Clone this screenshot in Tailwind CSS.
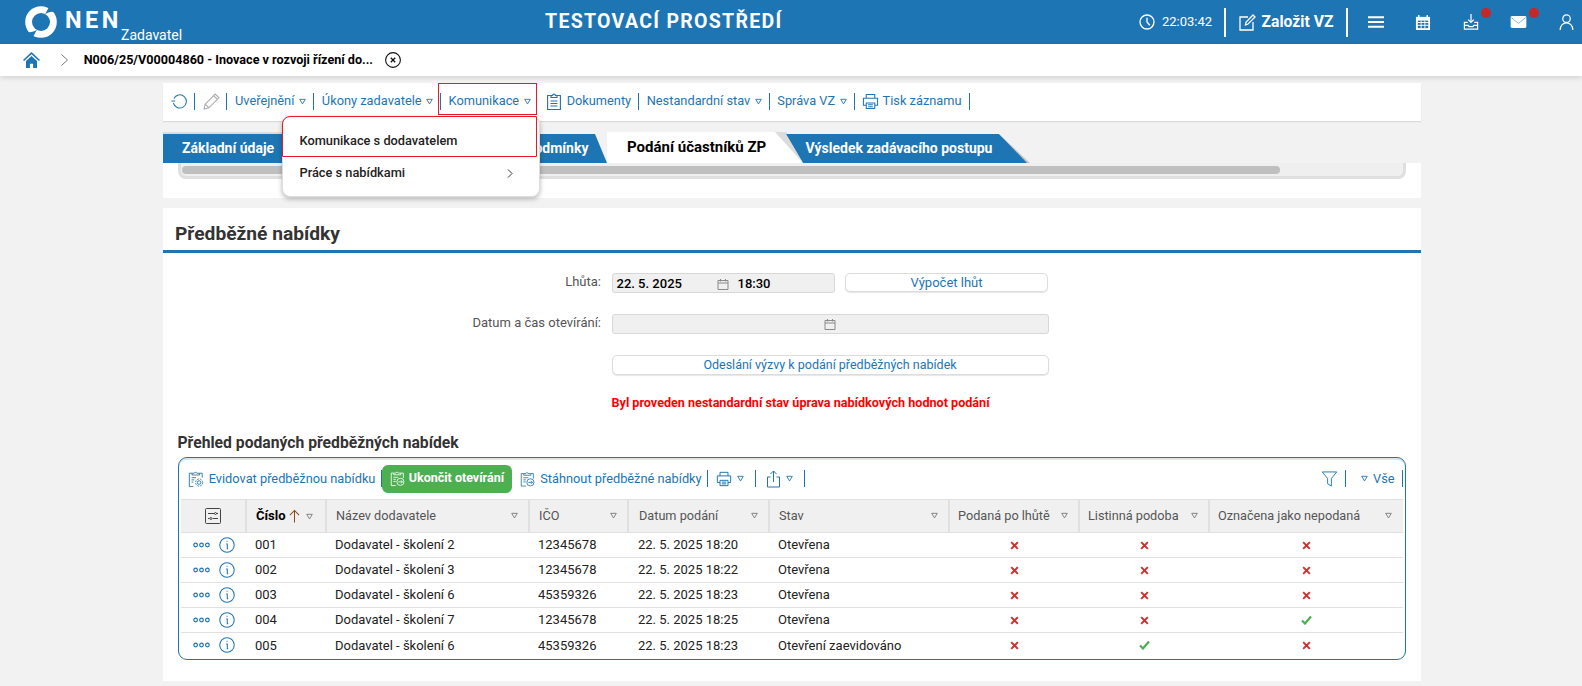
<!DOCTYPE html>
<html lang="cs">
<head>
  <meta charset="UTF-8">
  <title>NEN Zadavatel</title>
  <script src="https://cdn.jsdelivr.net/npm/@tailwindcss/browser@4"></script>
</head>
<body class="bg-[#f2f2f2] font-['Roboto',sans-serif] h-[686px] w-[1582px] overflow-hidden relative">
  <!-- shared icons -->
  <svg class="hidden">
    <symbol id="tri" viewBox="0 0 8 8"><path d="M.8 1.500h6.400L4 6.800z" fill="none" stroke="currentColor" stroke-width="1"/></symbol>
    <symbol id="dots" viewBox="0 0 17 6"><g fill="none" stroke="#1e75b3" stroke-width="1.200"><circle cx="2.600" cy="3" r="1.800"/><circle cx="8.500" cy="3" r="1.800"/><circle cx="14.400" cy="3" r="1.800"/></g></symbol>
    <symbol id="info" viewBox="0 0 17 17"><circle cx="8.500" cy="8.500" r="7.700" fill="none" stroke="#1e75b3" stroke-width="1.100"/><path d="M8 4.600h1.100M7.600 7.400h1.200v5h1" fill="none" stroke="#1e75b3" stroke-width="1.100"/></symbol>
    <symbol id="no" viewBox="0 0 10 10"><path d="M1.300 1.300l7.400 7.400M8.700 1.300l-7.400 7.400" stroke="#d32f2f" stroke-width="2.200"/></symbol>
    <symbol id="yes" viewBox="0 0 11 10"><path d="M1 5.500l3 3 6-7" fill="none" stroke="#4caf50" stroke-width="2.200"/></symbol>
    <symbol id="cal" viewBox="0 0 12 12"><path d="M1 2.500h10v9H1zM1 5h10M3.500 1v2.500M8.500 1v2.500" fill="none" stroke="#8a8a8a"/></symbol>
    <symbol id="print" viewBox="0 0 18 18"><g fill="none" stroke="currentColor" stroke-width="1.100"><path d="M4.500 5.500V1.500h9v4M4.500 13H1.500V5.500h15V13h-3"/><path d="M4.500 10.500h9v6h-9zM6.500 12.500h5M6.500 14.500h5"/></g></symbol>
    <symbol id="clip" viewBox="0 0 14 17"><g fill="none" stroke="currentColor" stroke-width="1.100"><path d="M4 2.500H.6v14h12.800v-14H10"/><path d="M4 4.500v-2h1.600a1.400 1.400 0 0 1 2.800 0H10v2z"/><path d="M3.500 8h7M3.500 10.500h7M3.500 13h7"/></g></symbol>
    <symbol id="clipgo" viewBox="0 0 18 20"><g fill="none" stroke="currentColor" stroke-width="1"><path d="M7 18.500H1.500v-15h3M13 3.500h3v6"/><path d="M4.500 5.500v-2h2.500a1.600 1.600 0 0 1 3 0h3v2z"/><path d="M4 8.500h6M4 11h3M4 13.500h3"/><circle cx="12.500" cy="14" r="4.300"/><path d="M10 14h5M13.200 12.200L15 14l-1.800 1.800"/></g></symbol>
  </svg>

  <!-- header -->
  <header class="h-[44px] bg-[#1e75b3] text-white flex items-center">
    <div class="w-[1124px] flex items-center pl-[25px] shrink-0">
      <svg class="w-[32px] h-[32px] shrink-0" viewBox="0 0 32 32">
        <circle cx="16" cy="16" r="15.800" fill="#fff"/>
        <circle cx="16" cy="16" r="9" fill="#1e75b3"/>
        <path d="M20 8.500C24 5.500 28 5 32 7L31 2 24 1z" fill="#1e75b3"/>
        <path d="M12 23.500C8 26.500 4 27 0 25l1 5 7 1z" fill="#1e75b3"/>
      </svg>
      <span class="ml-[8px] w-[56px] text-[23.500px] leading-none font-bold tracking-[3.500px] mb-[2px]">NEN</span>
      <span class="text-[14px] leading-none mt-[26px] w-[60px]">Zadavatel</span>
      <h1 class="ml-[364px] text-[19.500px] font-bold tracking-[1.300px] whitespace-nowrap">TESTOVACÍ PROSTŘEDÍ</h1>
    </div>
    <div class="flex items-center h-full grow">
      <svg class="w-[16px] h-[16px] ml-[14.500px]" viewBox="0 0 16 16" fill="none" stroke="#fff" stroke-width="1.300"><circle cx="8" cy="8" r="7"/><path d="M8 3.800V8l2.800 3.200"/></svg>
      <span class="ml-[7.500px] text-[13px] w-[50px]">22:03:42</span>
      <span class="ml-[12px] w-[2px] h-[29px] bg-white"></span>
      <svg class="w-[17px] h-[17px] ml-[12.500px]" viewBox="0 0 17 17" fill="none" stroke="#fff" stroke-width="1.300"><path d="M9 3H1v13h13V8"/><path d="M6.500 11l.6-3L14 1l2 2-7 7z"/></svg>
      <span class="ml-[6px] w-[72px] text-[15.700px] font-bold whitespace-nowrap">Založit VZ</span>
      <span class="ml-[12.700px] w-[2px] h-[29px] bg-white"></span>
      <svg class="w-[16px] h-[14px] ml-[19.600px]" viewBox="0 0 17 14" stroke="#fff" stroke-width="2"><path d="M0 2h17M0 7h17M0 12h17"/></svg>
      <svg class="w-[16px] h-[17px] ml-[31.700px]" viewBox="0 0 17 18"><path d="M1 3h15v14H1z" fill="#fff"/><path d="M4 1v3M13 1v3" stroke="#fff" stroke-width="1.500"/><path d="M3 7h11v8H3z" fill="#1e75b3"/><path d="M3 9h11M3 12h11M6.500 7v8M10.500 7v8" stroke="#fff"/></svg>
      <div class="relative ml-[32px] w-[16px] h-[16px]">
        <svg class="w-[16px] h-[16px]" viewBox="0 0 16 17" fill="none" stroke="#fff" stroke-width="1.300"><path d="M8 0v9M5 6l3 3 3-3"/><path d="M4.500 9H1v7h14V9h-3.500M1 12h4l1 1.500h4l1-1.500h4" /></svg>
        <span class="absolute -top-[6px] left-[17.400px] w-[10px] h-[10px] rounded-full bg-[#c62828]"></span>
      </div>
      <div class="relative ml-[30.700px] w-[17px] h-[12px]">
        <svg class="w-[17px] h-[12px]" viewBox="0 0 17 13"><rect width="17" height="13" rx="1.500" fill="#fff"/><path d="M.5 1.500L8.500 8l8-6.500" fill="none" stroke="#7fb2d6"/></svg>
        <span class="absolute -top-[8.300px] left-[19px] w-[10px] h-[10px] rounded-full bg-[#c62828]"></span>
      </div>
      <svg class="w-[15px] h-[16px] ml-[32px]" viewBox="0 0 15 17" fill="none" stroke="#fff" stroke-width="1.300"><circle cx="7.500" cy="5" r="4"/><path d="M.7 17c0-4.500 3-7.500 6.800-7.500s6.800 3 6.800 7.500"/></svg>
    </div>
  </header>

  <!-- breadcrumb -->
  <nav class="h-[32px] bg-white flex items-center shadow-[0_2px_5px_rgba(0,0,0,0.13)] relative">
    <svg class="w-[17px] h-[16px] ml-[23px]" viewBox="0 0 16 15" fill="#1e75b3"><path d="M8 0L0 7.500l1 1L8 2l7 6.500 1-1z"/><path d="M2.800 8.500L8 3.800l5.200 4.700V15H9.500v-4h-3v4H2.800z"/></svg>
    <svg class="w-[7px] h-[12px] ml-[20.700px]" viewBox="0 0 7 12" fill="none" stroke="#777" stroke-width="1"><path d="M.5.500L6.500 6l-6 5.500"/></svg>
    <span class="ml-[16px] w-[288.500px] text-[12.600px] font-bold text-black whitespace-nowrap">N006/25/V00004860 - Inovace v rozvoji řízení do...</span>
    <svg class="w-[16px] h-[16px] ml-[12.500px]" viewBox="0 0 16 16" fill="none" stroke="#111" stroke-width="1.100"><circle cx="8" cy="8" r="7.400"/><path d="M5.800 5.800l4.400 4.400M10.200 5.800l-4.400 4.400" stroke-width="1.300"/></svg>
  </nav>

  <main class="ml-[163px] w-[1258px]">
    <!-- action toolbar -->
    <div class="mt-[7px] h-[38px] pb-[2px] bg-white flex items-center pl-[7.500px] text-[12.800px] text-[#1e75b3] whitespace-nowrap shadow-[0_1px_1px_rgba(0,0,0,0.1)]">
      <svg class="w-[16px] h-[16px]" viewBox="0 0 17 16" fill="none" stroke="#1e75b3" stroke-width="1.100"><path d="M3 5.500A7 7 0 1 1 2.500 10M.5 8h4"/></svg>
      <span class="ml-[7px] w-px h-[17px] bg-[#1e75b3]"></span>
      <svg class="w-[17px] h-[17px] ml-[8px]" viewBox="0 0 16 16" fill="none" stroke="#aaa" stroke-width="1"><path d="M1 15l1-4.500L11.500 1l3.500 3.500L5.500 14zM2 10.500L5.500 14M10 2.500l3.500 3.500"/></svg>
      <span class="ml-[6.500px] w-px h-[17px] bg-[#1e75b3]"></span>
      <span class="ml-[8px]">Uveřejnění</span><svg class="w-[7px] h-[7px] ml-[4.500px] mt-[1px]"><use href="#tri"/></svg>
      <span class="ml-[7px] w-px h-[17px] bg-[#1e75b3]"></span>
      <span class="ml-[8px]">Úkony zadavatele</span><svg class="w-[7px] h-[7px] ml-[4.500px] mt-[1px]"><use href="#tri"/></svg>
      <span class="ml-[6.500px] w-px h-[17px] bg-[#1e75b3]"></span>
      <span class="ml-[8px]">Komunikace</span><svg class="w-[7px] h-[7px] ml-[4.500px] mt-[1px]"><use href="#tri"/></svg>
      <svg class="w-[14px] h-[17px] ml-[16.500px]"><use href="#clip"/></svg>
      <span class="ml-[5.500px]">Dokumenty</span>
      <span class="ml-[7px] w-px h-[17px] bg-[#1e75b3]"></span>
      <span class="ml-[7.500px]">Nestandardní stav</span><svg class="w-[7px] h-[7px] ml-[4.500px] mt-[1px]"><use href="#tri"/></svg>
      <span class="ml-[7px] w-px h-[17px] bg-[#1e75b3]"></span>
      <span class="ml-[7.500px]">Správa VZ</span><svg class="w-[7px] h-[7px] ml-[4.500px] mt-[1px]"><use href="#tri"/></svg>
      <span class="ml-[7px] w-px h-[17px] bg-[#1e75b3]"></span>
      <svg class="w-[17px] h-[17px] ml-[7px]"><use href="#print"/></svg>
      <span class="ml-[4px]">Tisk záznamu</span>
      <span class="ml-[7px] w-px h-[17px] bg-[#1e75b3]"></span>
    </div>

    <!-- tabs -->
    <div class="mt-[11px] h-[31px] flex items-end text-[14px] font-bold text-white whitespace-nowrap">
      <div class="h-[29px] w-[130px] bg-[#1e75b3] pl-[19px] flex items-center shadow-[0_-2px_0_#dcdcdc]">Základní údaje</div>
      <div class="h-[29px] w-[314px] bg-[#1e75b3] pr-[18.500px] flex items-center justify-end [clip-path:polygon(0_0,calc(100%-12px)_0,100%_100%,0_100%)]">Zadávací podmínky</div>
      <div class="h-[31px] w-[196px] bg-[#dcdcdc] [clip-path:polygon(0_0,calc(100%-17px)_0,100%_100%,0_100%)]">
        <div class="h-full bg-white text-black text-[15px] pl-[20px] flex items-center [clip-path:polygon(0_0,calc(100%-28px)_0,100%_100%,0_100%)]">Podání účastníků ZP</div>
      </div>
      <div class="h-[29px] w-[244px] -ml-[17px] bg-[#c4c4c4] [clip-path:polygon(0_0,calc(100%-31px)_0,100%_100%,17px_100%)]">
        <div class="h-full bg-[#1e75b3] pl-[19.500px] flex items-center [clip-path:polygon(0_0,calc(100%-31px)_0,calc(100%-3px)_100%,17px_100%)]">Výsledek zadávacího postupu</div>
      </div>
    </div>

    <!-- scroll remnant of the tab content -->
    <div class="h-[35px] bg-white px-[15px]">
      <div class="h-[16px] bg-[#efefef] border-x-[3px] border-b-[3px] border-[#dfdfdf] rounded-b-[8px] pl-[1px] pt-[3px]">
        <div class="h-[8px] w-[1098px] bg-[#bfbfbf] rounded-full"></div>
      </div>
    </div>

    <!-- preliminary offers -->
    <section class="mt-[10px] h-[473px] bg-white">
      <h2 class="h-[45px] border-b-[3px] border-[#1e75b3] pl-[12px] pt-[15px] text-[19.200px] leading-[22px] font-bold text-[#333]">Předběžné nabídky</h2>

      <div class="mt-[20px] ml-[278px] text-[13px]">
        <div class="flex h-[20px]">
          <label class="w-[160px] mr-[10.500px] text-right text-[#555] leading-[18px]">Lhůta:</label>
          <div class="w-[223px] h-[20px] pt-px bg-[#f0f0f0] border border-[#d8d8d8] rounded-[3px] flex items-center pl-[4px] font-medium text-black">
            <span class="w-[100px]">22. 5. 2025</span>
            <svg class="w-[12px] h-[12px]"><use href="#cal"/></svg>
            <span class="ml-[9px]">18:30</span>
          </div>
          <button class="ml-[10.500px] w-[203px] h-[19px] bg-white border border-[#dcdcdc] rounded-[5px] text-[#1e75b3] leading-none shadow-[0_1px_1px_rgba(0,0,0,0.1)]">Výpočet lhůt</button>
        </div>
        <div class="flex h-[20px] mt-[21px]">
          <label class="w-[160px] mr-[10.500px] text-right text-[#555] leading-[18px]">Datum a čas otevírání:</label>
          <div class="w-[437px] h-[20px] bg-[#f0f0f0] border border-[#d8d8d8] rounded-[3px] flex items-center justify-center">
            <svg class="w-[12px] h-[12px]"><use href="#cal"/></svg>
          </div>
        </div>
        <button class="block mt-[21px] ml-[170.500px] w-[437px] h-[20px] bg-white border border-[#dcdcdc] rounded-[5px] text-[12.500px] text-[#1e75b3] leading-none shadow-[0_1px_1px_rgba(0,0,0,0.1)]">Odeslání výzvy k podání předběžných nabídek</button>
        <p class="mt-[19px] ml-[170.500px] text-[12.600px] leading-[18px] font-bold text-[#f00] whitespace-nowrap">Byl proveden nestandardní stav úprava nabídkových hodnot podání</p>
      </div>

      <h3 class="mt-[21px] ml-[14.500px] text-[15.700px] leading-[20px] font-bold text-[#333]">Přehled podaných předběžných nabídek</h3>

      <!-- table panel -->
      <div class="mt-[4px] ml-[15px] w-[1228px] h-[203px] border border-[#1e75b3] rounded-[9px] overflow-hidden shadow-[inset_0_2px_0_#e3e3e3] px-px">
        <div class="h-[41px] flex items-center pl-[8px] text-[12.800px] text-[#1e75b3] whitespace-nowrap">
          <svg class="w-[16px] h-[18px]" viewBox="0 0 18 20" fill="none" stroke="currentColor" stroke-width="1"><path d="M6 18.500H1.500v-15h3M13 3.500h3v5"/><path d="M4.500 5.500v-2h2.500a1.600 1.600 0 0 1 3 0h3v2z"/><path d="M4 8.500h5M4 11h3M4 13.500h2"/><circle cx="12.500" cy="14" r="2"/><circle cx="12.500" cy="14" r="4" stroke-dasharray="2 1.200"/></svg>
          <span class="ml-[4.700px] w-[166px]">Evidovat předběžnou nabídku</span>
          <span class="ml-[6.600px] w-px h-[17px] bg-[#1e75b3]"></span>
          <button class="h-[28px] w-[129.600px] bg-[#4caf50] text-white font-bold text-[12.500px] rounded-[6px] flex items-center pl-[7.500px]">
            <svg class="w-[15px] h-[17px] mr-[4px]"><use href="#clipgo"/></svg>Ukončit otevírání
          </button>
          <svg class="w-[15px] h-[18px] ml-[8.300px]"><use href="#clipgo"/></svg>
          <span class="ml-[5px] w-[161px]">Stáhnout předběžné nabídky</span>
          <span class="ml-[6px] w-px h-[17px] bg-[#1e75b3]"></span>
          <svg class="w-[16px] h-[16px] ml-[8px]"><use href="#print"/></svg>
          <svg class="w-[7px] h-[7px] ml-[5px]"><use href="#tri"/></svg>
          <span class="ml-[11px] w-px h-[17px] bg-[#1e75b3]"></span>
          <svg class="w-[15px] h-[18px] ml-[9.700px]" viewBox="0 0 14 18" fill="none" stroke="currentColor"><path d="M4 7H1v10h12V7h-3M7 12V1M4 4l3-3 3 3"/></svg>
          <svg class="w-[7px] h-[7px] ml-[5px]"><use href="#tri"/></svg>
          <span class="ml-[11px] w-px h-[17px] bg-[#1e75b3]"></span>
          <svg class="w-[17px] h-[16px] ml-auto" viewBox="0 0 17 17" fill="none" stroke="currentColor"><path d="M.8 1h15.400L10.500 8v8l-4-2.500V8z"/></svg>
          <span class="ml-[7px] w-px h-[17px] bg-[#1e75b3]"></span>
          <svg class="w-[7px] h-[7px] ml-[15.400px]"><use href="#tri"/></svg>
          <span class="ml-[5px] w-[21.300px]">Vše</span>
          <span class="ml-[7.700px] mr-px w-px h-[17px] bg-[#1e75b3]"></span>
        </div>

        <table class="w-[1222px] ml-px table-fixed border-collapse text-[13px] text-[#222] whitespace-nowrap">
          <thead>
            <tr class="h-[33px] bg-[#f0f0f0] text-left text-[12.700px] text-[#555] border-y border-[#e0e0e0]">
              <th class="w-[65px] font-normal border-r-2 border-[#e0e0e0]"><svg class="w-[16px] h-[16px] mx-auto" viewBox="0 0 16 16" fill="none" stroke="#444"><rect x=".5" y=".5" width="15" height="15" rx="1"/><path d="M3 5.500h6.500M11.500 5.500H13M3 10.500h1.500M7.500 10.500H13"/><circle cx="10.500" cy="5.500" r="1"/><circle cx="5.800" cy="10.500" r="1"/></svg></th>
              <th class="w-[80px] font-normal border-r-2 border-[#e0e0e0] pl-[9px]"><div class="flex items-center"><b class="text-black text-[13px] font-bold w-[33px]">Číslo</b><svg class="w-[11px] h-[14px]" viewBox="0 0 12 14" fill="none" stroke="#8a4a1c" stroke-width="1.100"><path d="M6 14V1M1 6l5-5 5 5"/></svg><svg class="w-[7px] h-[7px] ml-[6px] text-[#777]"><use href="#tri"/></svg></div></th>
              <th class="w-[203px] font-normal border-r-2 border-[#e0e0e0] pl-[9px]"><div class="flex items-center justify-between pr-[10px]">Název dodavatele<svg class="w-[7px] h-[7px] text-[#777]"><use href="#tri"/></svg></div></th>
              <th class="w-[99px] font-normal border-r-2 border-[#e0e0e0] pl-[9px]"><div class="flex items-center justify-between pr-[10px]">IČO<svg class="w-[7px] h-[7px] text-[#777]"><use href="#tri"/></svg></div></th>
              <th class="w-[141px] font-normal border-r-2 border-[#e0e0e0] pl-[10px]"><div class="flex items-center justify-between pr-[10px]">Datum podání<svg class="w-[7px] h-[7px] text-[#777]"><use href="#tri"/></svg></div></th>
              <th class="w-[180px] font-normal border-r-2 border-[#e0e0e0] pl-[9px]"><div class="flex items-center justify-between pr-[10px]">Stav<svg class="w-[7px] h-[7px] text-[#777]"><use href="#tri"/></svg></div></th>
              <th class="w-[130px] font-normal border-r-2 border-[#e0e0e0] pl-[8px]"><div class="flex items-center justify-between pr-[10px]">Podaná po lhůtě<svg class="w-[7px] h-[7px] text-[#777]"><use href="#tri"/></svg></div></th>
              <th class="w-[130px] font-normal border-r-2 border-[#e0e0e0] pl-[8px]"><div class="flex items-center justify-between pr-[10px]">Listinná podoba<svg class="w-[7px] h-[7px] text-[#777]"><use href="#tri"/></svg></div></th>
              <th class="font-normal pl-[8px]"><div class="flex items-center justify-between pr-[11px]">Označena jako nepodaná<svg class="w-[7px] h-[7px] text-[#777]"><use href="#tri"/></svg></div></th>
            </tr>
          </thead>
          <tbody>
            <tr class="h-[25px] border-b border-[#e0e0e0]">
              <td class="pl-[12px]"><div class="flex items-center"><svg class="w-[17px] h-[6px]"><use href="#dots"/></svg><svg class="w-[16px] h-[16px] ml-[9.300px]"><use href="#info"/></svg></div></td>
              <td class="pl-[9px]">001</td><td class="pl-[9px]">Dodavatel - školení 2</td><td class="pl-[9px]">12345678</td><td class="pl-[10px]">22. 5. 2025 18:20</td><td class="pl-[9px]">Otevřena</td>
              <td><svg class="w-[9px] h-[9px] mx-auto"><use href="#no"/></svg></td><td><svg class="w-[9px] h-[9px] mx-auto"><use href="#no"/></svg></td><td><svg class="w-[9px] h-[9px] mx-auto"><use href="#no"/></svg></td>
            </tr>
            <tr class="h-[25px] border-b border-[#e0e0e0]">
              <td class="pl-[12px]"><div class="flex items-center"><svg class="w-[17px] h-[6px]"><use href="#dots"/></svg><svg class="w-[16px] h-[16px] ml-[9.300px]"><use href="#info"/></svg></div></td>
              <td class="pl-[9px]">002</td><td class="pl-[9px]">Dodavatel - školení 3</td><td class="pl-[9px]">12345678</td><td class="pl-[10px]">22. 5. 2025 18:22</td><td class="pl-[9px]">Otevřena</td>
              <td><svg class="w-[9px] h-[9px] mx-auto"><use href="#no"/></svg></td><td><svg class="w-[9px] h-[9px] mx-auto"><use href="#no"/></svg></td><td><svg class="w-[9px] h-[9px] mx-auto"><use href="#no"/></svg></td>
            </tr>
            <tr class="h-[25px] border-b border-[#e0e0e0]">
              <td class="pl-[12px]"><div class="flex items-center"><svg class="w-[17px] h-[6px]"><use href="#dots"/></svg><svg class="w-[16px] h-[16px] ml-[9.300px]"><use href="#info"/></svg></div></td>
              <td class="pl-[9px]">003</td><td class="pl-[9px]">Dodavatel - školení 6</td><td class="pl-[9px]">45359326</td><td class="pl-[10px]">22. 5. 2025 18:23</td><td class="pl-[9px]">Otevřena</td>
              <td><svg class="w-[9px] h-[9px] mx-auto"><use href="#no"/></svg></td><td><svg class="w-[9px] h-[9px] mx-auto"><use href="#no"/></svg></td><td><svg class="w-[9px] h-[9px] mx-auto"><use href="#no"/></svg></td>
            </tr>
            <tr class="h-[25px] border-b border-[#e0e0e0]">
              <td class="pl-[12px]"><div class="flex items-center"><svg class="w-[17px] h-[6px]"><use href="#dots"/></svg><svg class="w-[16px] h-[16px] ml-[9.300px]"><use href="#info"/></svg></div></td>
              <td class="pl-[9px]">004</td><td class="pl-[9px]">Dodavatel - školení 7</td><td class="pl-[9px]">12345678</td><td class="pl-[10px]">22. 5. 2025 18:25</td><td class="pl-[9px]">Otevřena</td>
              <td><svg class="w-[9px] h-[9px] mx-auto"><use href="#no"/></svg></td><td><svg class="w-[9px] h-[9px] mx-auto"><use href="#no"/></svg></td><td><svg class="w-[11px] h-[10px] mx-auto"><use href="#yes"/></svg></td>
            </tr>
            <tr class="h-[25px]">
              <td class="pl-[12px]"><div class="flex items-center"><svg class="w-[17px] h-[6px]"><use href="#dots"/></svg><svg class="w-[16px] h-[16px] ml-[9.300px]"><use href="#info"/></svg></div></td>
              <td class="pl-[9px]">005</td><td class="pl-[9px]">Dodavatel - školení 6</td><td class="pl-[9px]">45359326</td><td class="pl-[10px]">22. 5. 2025 18:23</td><td class="pl-[9px]">Otevření zaevidováno</td>
              <td><svg class="w-[9px] h-[9px] mx-auto"><use href="#no"/></svg></td><td><svg class="w-[11px] h-[10px] mx-auto"><use href="#yes"/></svg></td><td><svg class="w-[9px] h-[9px] mx-auto"><use href="#no"/></svg></td>
            </tr>
          </tbody>
        </table>
      </div>
    </section>
  </main>

  <!-- open Komunikace menu and its red highlight boxes -->
  <div class="absolute left-[438px] top-[83px] w-[99px] h-[32px] border border-[#e8192c]"></div>
  <div class="absolute left-[282px] top-[116px] w-[258px] h-[81px] bg-white rounded-[8px] border border-[#ddd] shadow-[0_2px_5px_rgba(0,0,0,0.28)] text-[12.800px] font-medium text-[#222]">
    <div class="h-[41px] w-[255px] -ml-px -mt-px flex items-center pl-[16.500px] pt-[8px] border border-[#e8192c] rounded-tl-[8px]">Komunikace s dodavatelem</div>
    <div class="h-[32px] flex items-center justify-between pl-[16.500px] pr-[26px]">Práce s nabídkami
      <svg class="w-[6px] h-[9px]" viewBox="0 0 6 9" fill="none" stroke="#333"><path d="M1 .5l4 4-4 4"/></svg>
    </div>
  </div>
</body>
</html>
